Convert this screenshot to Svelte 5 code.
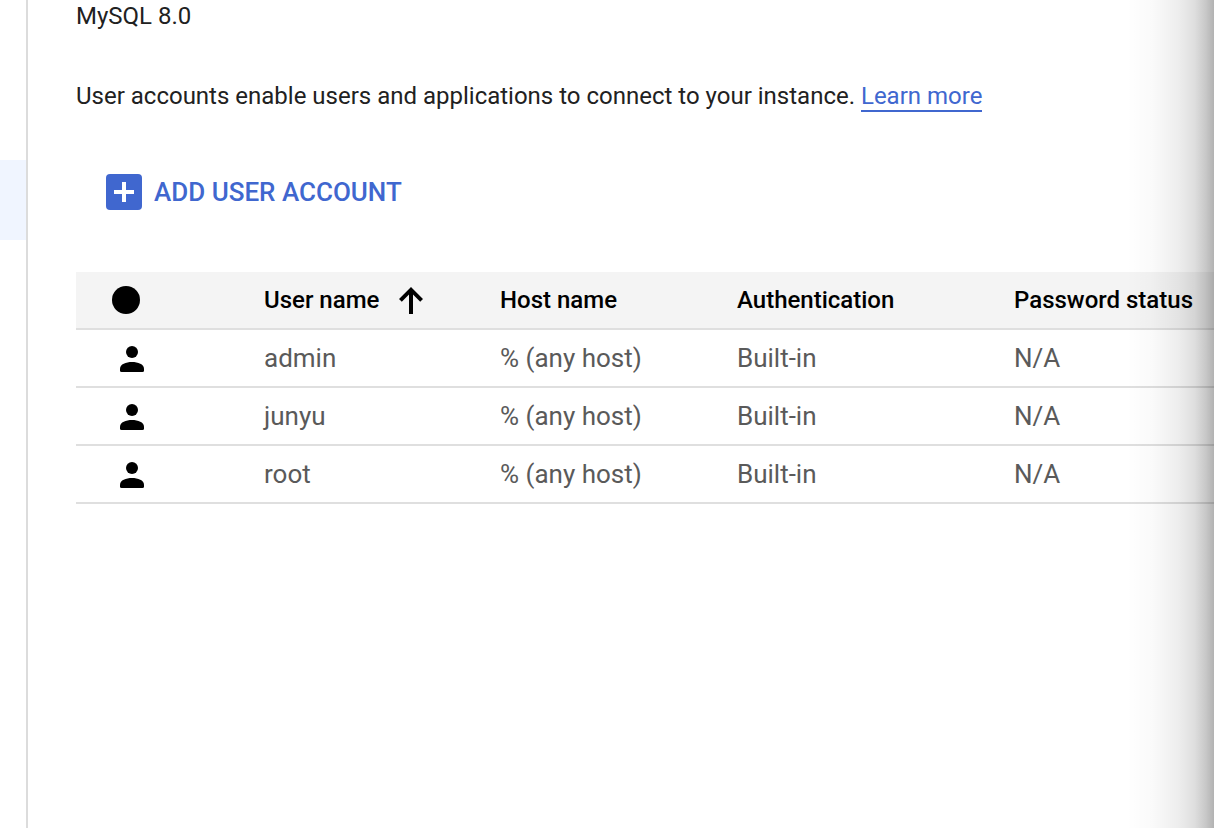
<script>
  const users = ['admin', 'junyu', 'root'];
</script>

<div class="shell">
  <aside class="sidebar" aria-label="Navigation"><div class="selected"></div></aside>
  <main>
    <p class="version">MySQL 8.0</p>
    <p class="intro">User accounts enable users and applications to connect to your instance. <a href="#learn">Learn more</a></p>
    <button class="add" type="button">
      <svg viewBox="0 0 36 36" width="36" height="36" aria-hidden="true">
        <rect width="36" height="36" rx="4" fill="#4067cf" />
        <path d="M8 18h20M18 8v20" stroke="#fff" stroke-width="4" />
      </svg>
      <span>ADD USER ACCOUNT</span>
    </button>
    <table>
      <colgroup><col class="c-icon" /><col class="c-user" /><col class="c-host" /><col class="c-auth" /><col /></colgroup>
      <thead>
        <tr>
          <th><svg class="dot" viewBox="0 0 28 28" width="28" height="28" aria-hidden="true"><circle cx="14" cy="14" r="14" /></svg></th>
          <th><span class="sort">User name
            <svg viewBox="0 0 24 28" width="24" height="28" aria-hidden="true"><path d="M12 1l12 12-2.800 2.800-7.200-7.200V28h-4V8.600l-7.200 7.200L0 13z" /></svg></span></th>
          <th>Host name</th>
          <th>Authentication</th>
          <th>Password status</th>
        </tr>
      </thead>
      <tbody>
        {#each users as user}
          <tr>
            <td><svg class="person" viewBox="0 0 24 28" width="24" height="28" aria-hidden="true"><circle cx="12" cy="8" r="6" /><path d="M0 25c0-5 6-7 12-7s12 2 12 7v1.500q0 1.500-1.500 1.500h-21Q0 28 0 26.500z" /></svg></td>
            <td>{user}</td>
            <td>% (any host)</td>
            <td>Built-in</td>
            <td>N/A</td>
          </tr>
        {/each}
      </tbody>
    </table>
  </main>
  <div class="shade"></div>
</div>

<style>
  :global(body) { margin: 0; background: #fff; }
  .shell { position: relative; display: flex; min-height: 100vh; overflow: hidden; font-family: Roboto, sans-serif; color: #212121; }
  .sidebar { flex: 0 0 26px; border-right: 2px solid #dcdcdc; padding-top: 160px; box-sizing: content-box; }
  .selected { height: 80px; background: #f0f5ff; }
  main { flex: 1; min-width: 0; padding-left: 48px; }
  p { margin: 0; font-size: 24px; line-height: 32px; white-space: nowrap; }
  .intro { margin-top: 48px; }
  a { color: #4067cf; text-decoration: none; border-bottom: 2px solid #4067cf; }
  .add { display: flex; align-items: center; gap: 12px; margin: 62px 0 62px 30px; padding: 0; border: 0; background: none; color: #4067cf; font: 500 26px/36px Roboto, sans-serif; white-space: nowrap; }
  table { width: 100%; table-layout: fixed; border-collapse: separate; border-spacing: 0; font-size: 26px; line-height: 32px; }
  .c-icon { width: 188px; }
  .c-user { width: 236px; }
  .c-host { width: 237px; }
  .c-auth { width: 277px; }
  th, td { height: 56px; padding: 0; border-bottom: 2px solid #dfdfdf; text-align: left; white-space: nowrap; }
  th { background: #f4f4f4; color: #000; font-size: 24px; font-weight: 500; }
  td { color: #5a5a5a; }
  svg { display: block; }
  .dot { margin-left: 36px; }
  .person { margin-left: 44px; }
  .sort { display: flex; align-items: center; gap: 20px; }
  .shade { position: absolute; top: 0; right: 0; bottom: 0; width: 88px; pointer-events: none; background: linear-gradient(to right, transparent, rgba(0,0,0,.02) 30%, rgba(0,0,0,.07) 60%, rgba(0,0,0,.13) 78%, rgba(0,0,0,.21) 90%, rgba(0,0,0,.3)); }
</style>
